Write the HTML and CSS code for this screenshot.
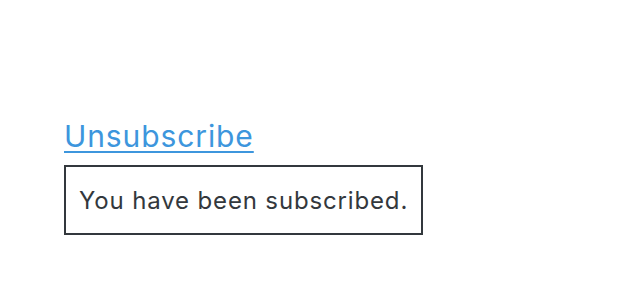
FILE: index.html
```html
<!DOCTYPE html>
<html lang="en">
<head>
  <meta charset="UTF-8">
  <title>Subscription</title>
  <link rel="stylesheet" href="styles.css">
</head>
<body>
  <div class="page">
    <a href="#" class="unsubscribe">Unsubscribe</a>
    <div class="notice">You have been subscribed.</div>
  </div>
</body>
</html>
```

FILE: styles.css
```css
body {
  margin: 0;
  font-family: Inter, "Open Sans", sans-serif;
  background: #fff;
}

.page {
  padding: 114px 0 0 64px;
  display: flex;
  flex-direction: column;
  align-items: flex-start;
}

.unsubscribe {
  color: #3d96dd;
  font-size: 30px;
  line-height: 44px;
  letter-spacing: 0.9px;
  text-decoration: underline;
  text-decoration-thickness: 2px;
  text-underline-offset: 4px;
}

.notice {
  margin-top: 7px;
  border: 2px solid #33383d;
  color: #33383d;
  font-size: 24px;
  line-height: 30px;
  letter-spacing: 0.85px;
  padding: 19px 13px 17px;
  width: 329px;
  white-space: nowrap;
}
```
